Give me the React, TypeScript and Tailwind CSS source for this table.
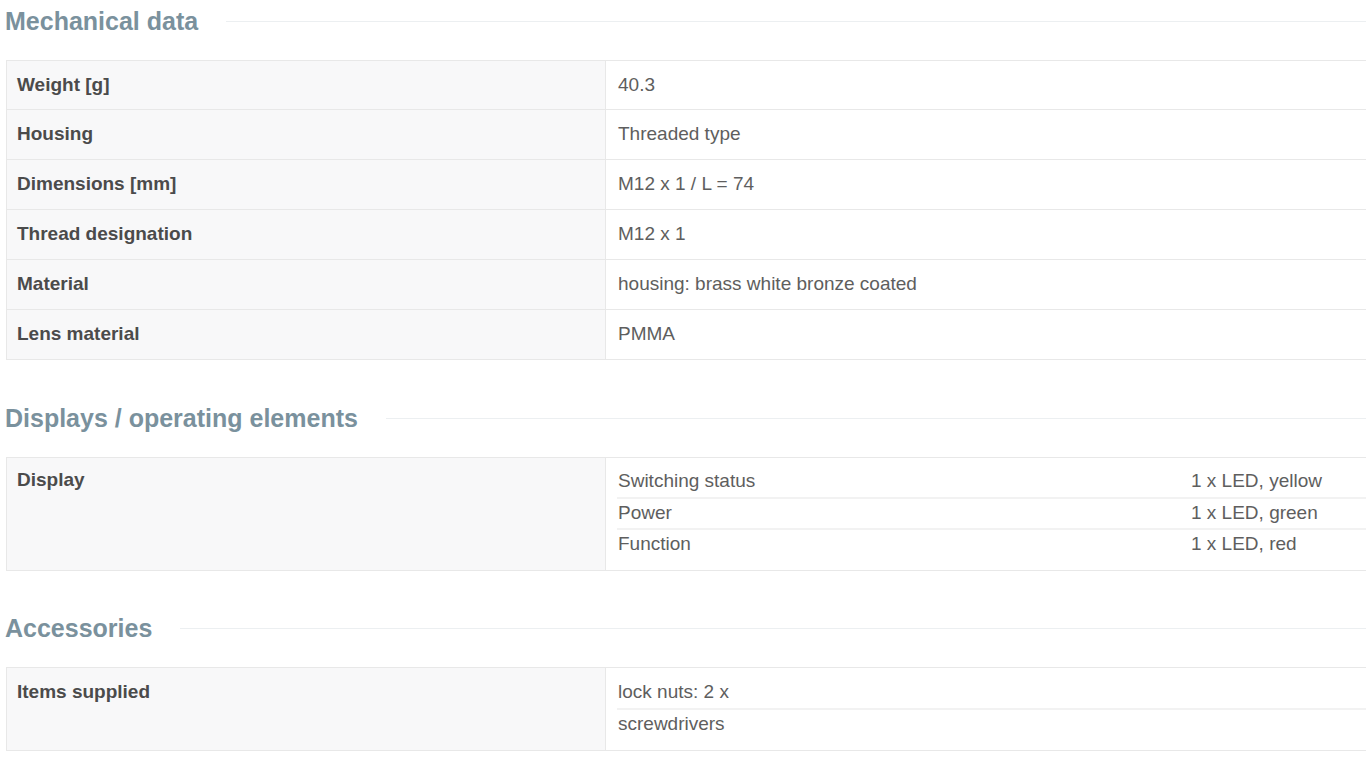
const mechanical: [string, string][] = [
  ["Weight [g]", "40.3"],
  ["Housing", "Threaded type"],
  ["Dimensions [mm]", "M12 x 1 / L = 74"],
  ["Thread designation", "M12 x 1"],
  ["Material", "housing: brass white bronze coated"],
  ["Lens material", "PMMA"],
];

const displays: [string, string][] = [
  ["Switching status", "1 x LED, yellow"],
  ["Power", "1 x LED, green"],
  ["Function", "1 x LED, red"],
];

const supplied = ["lock nuts: 2 x", "screwdrivers"];

function SectionTitle({ title }: { title: string }) {
  return (
    <div className="flex items-center h-[30px] pl-[5px]">
      <h2 className="text-[25px] font-bold text-[#7a919d] leading-[30px] whitespace-nowrap">{title}</h2>
      <div className="flex-1 ml-[28px] h-px bg-[#eceff1]" />
    </div>
  );
}

export default function App() {
  return (
    <div className="w-[1366px] h-[768px] overflow-hidden bg-white pt-[6px] font-['Liberation_Sans',Arial,sans-serif] text-[19px]">
      {/* Mechanical data */}
      <SectionTitle title="Mechanical data" />
      <div className="mt-[24px] ml-[6px] border border-r-0 border-[#e8e8e8]">
        {mechanical.map(([label, value], i) => (
          <div key={label} className={`flex ${i > 0 ? "h-[50px] border-t border-[#e8e8e8]" : "h-[48px]"}`}>
            <div className="w-[599px] shrink-0 bg-[#f8f8f9] border-r border-[#e8e8e8] flex items-center pl-[10px] font-bold text-[#4b4b4b]">
              {label}
            </div>
            <div className="flex-1 flex items-center pl-[12px] text-[#5e5e5e]">{value}</div>
          </div>
        ))}
      </div>

      {/* Displays / operating elements */}
      <div className="mt-[43px]">
        <SectionTitle title="Displays / operating elements" />
      </div>
      <div className="mt-[24px] ml-[6px] border border-r-0 border-[#e8e8e8] flex">
        <div className="w-[599px] shrink-0 bg-[#f8f8f9] border-r border-[#e8e8e8] pl-[10px] pt-[10px] font-bold text-[#4b4b4b] leading-[24px]">
          Display
        </div>
        <div className="flex-1 pl-[11px] pt-[8px] pb-[11px] text-[#5e5e5e]">
          {displays.map(([name, val], i) => (
            <div
              key={name}
              className={`grid grid-cols-[573px_1fr] h-[31px] items-center pl-[1px] ${i > 0 ? "border-t-2 border-[#f2f2f2]" : ""}`}
            >
              <span>{name}</span>
              <span>{val}</span>
            </div>
          ))}
        </div>
      </div>

      {/* Accessories */}
      <div className="mt-[42px]">
        <SectionTitle title="Accessories" />
      </div>
      <div className="mt-[24px] ml-[6px] border border-r-0 border-[#e8e8e8] flex">
        <div className="w-[599px] shrink-0 bg-[#f8f8f9] border-r border-[#e8e8e8] pl-[10px] pt-[12px] font-bold text-[#4b4b4b] leading-[24px]">
          Items supplied
        </div>
        <div className="flex-1 pl-[11px] pt-[9px] pb-[11px] text-[#5e5e5e]">
          {supplied.map((item, i) => (
            <div
              key={item}
              className={`h-[31px] flex items-center pl-[1px] ${i > 0 ? "border-t-2 border-[#f2f2f2]" : ""}`}
            >
              {item}
            </div>
          ))}
        </div>
      </div>
    </div>
  );
}
